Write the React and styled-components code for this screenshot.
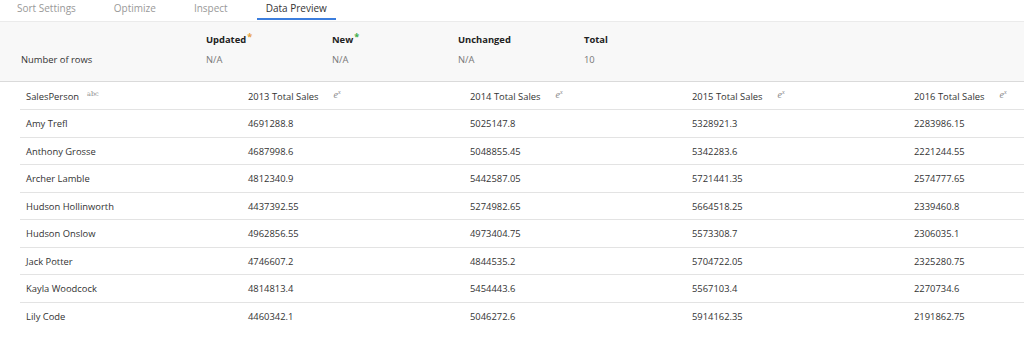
import React from "react";
import styled, { createGlobalStyle } from "styled-components";

const Global = createGlobalStyle`
  html, body { margin: 0; padding: 0; background: #fff; }
  body { font-family: "Open Sans", "Noto Sans", sans-serif; color: #323130; overflow: hidden; }
`;

const Page = styled.div`
  width: 1024px;
  height: 357px;
  overflow: hidden;
  background: #fff;
`;

const TabBar = styled.div`
  display: flex;
  gap: 20px;
  padding-left: 8px;
  height: 21px;
`;

const Tab = styled.div`
  padding: 0 9px;
  font-size: 10px;
  line-height: 17px;
  height: 18px;
  color: ${(p) => (p.$active ? "#333" : "#999")};
  border-bottom: 2px solid ${(p) => (p.$active ? "#3b7ddd" : "transparent")};
  white-space: nowrap;
`;

const Summary = styled.div`
  display: grid;
  grid-template-columns: 185px 126px 126px 126px 126px;
  grid-template-rows: 20px 20px;
  align-content: start;
  padding-left: 21px;
  padding-top: 7px;
  box-sizing: border-box;
  height: 61px;
  background: #f8f8f8;
  border-top: 1px solid #ebebeb;
  border-bottom: 1px solid #dadada;
  font-size: 9.4px;
`;

const RowLabel = styled.div`
  grid-row: 2;
  grid-column: 1;
  display: flex;
  align-items: center;
  color: #333;
`;

const StatHead = styled.div`
  grid-row: 1;
  display: flex;
  align-items: center;
  font-weight: 700;
  color: #222;
`;

const Star = styled.span`
  color: ${(p) => p.$color};
  font-size: 9px;
  font-weight: 700;
  align-self: flex-start;
  margin-top: 1px;
  margin-left: 1px;
`;

const StatValue = styled.div`
  grid-row: 2;
  display: flex;
  align-items: center;
  color: #777;
`;

const Table = styled.div`
  margin-left: 20px;
  width: 1110px;
`;

const Row = styled.div`
  display: grid;
  grid-template-columns: repeat(5, 222px);
  height: ${(p) => (p.$head ? "28px" : "27.5px")};
  border-bottom: ${(p) => (p.$last ? "none" : "1px solid #e3e3e3")};
  box-sizing: border-box;
  font-size: 9.4px;
  color: #333;
`;

const Cell = styled.div`
  display: flex;
  align-items: center;
  padding-left: 6px;
  padding-top: 1px;
  white-space: nowrap;
`;

const TypeTag = styled.span`
  font-family: "DejaVu Serif", serif;
  font-size: 6.5px;
  color: #888;
  margin-left: 8px;
  margin-top: -4px;
`;

const ExpTag = styled.span`
  font-family: "Liberation Serif", serif;
  font-style: italic;
  font-size: 10px;
  color: #888;
  margin-left: 15px;
  margin-top: -3px;
  sup { font-size: 6px; }
`;

const tabs = ["Sort Settings", "Optimize", "Inspect", "Data Preview"];

const stats = [
  { label: "Updated", star: "#e8a13a", value: "N/A" },
  { label: "New", star: "#3fae49", value: "N/A" },
  { label: "Unchanged", value: "N/A" },
  { label: "Total", value: "10" },
];

const data = [
  ["Amy Trefl", "4691288.8", "5025147.8", "5328921.3", "2283986.15"],
  ["Anthony Grosse", "4687998.6", "5048855.45", "5342283.6", "2221244.55"],
  ["Archer Lamble", "4812340.9", "5442587.05", "5721441.35", "2574777.65"],
  ["Hudson Hollinworth", "4437392.55", "5274982.65", "5664518.25", "2339460.8"],
  ["Hudson Onslow", "4962856.55", "4973404.75", "5573308.7", "2306035.1"],
  ["Jack Potter", "4746607.2", "4844535.2", "5704722.05", "2325280.75"],
  ["Kayla Woodcock", "4814813.4", "5454443.6", "5567103.4", "2270734.6"],
  ["Lily Code", "4460342.1", "5046272.6", "5914162.35", "2191862.75"],
];

const years = ["2013", "2014", "2015", "2016"];

export default function App() {
  return (
    <Page>
      <Global />
      <TabBar>
        {tabs.map((t) => (
          <Tab key={t} $active={t === "Data Preview"}>{t}</Tab>
        ))}
      </TabBar>
      <Summary>
        <RowLabel>Number of rows</RowLabel>
        {stats.map((s, i) => (
          <StatHead key={s.label} style={{ gridColumn: i + 2 }}>
            {s.label}
            {s.star && <Star $color={s.star}>*</Star>}
          </StatHead>
        ))}
        {stats.map((s, i) => (
          <StatValue key={s.label + "v"} style={{ gridColumn: i + 2 }}>{s.value}</StatValue>
        ))}
      </Summary>
      <Table>
        <Row $head>
          <Cell>SalesPerson<TypeTag>abc</TypeTag></Cell>
          {years.map((y) => (
            <Cell key={y}>
              {y} Total Sales
              <ExpTag>e<sup>x</sup></ExpTag>
            </Cell>
          ))}
        </Row>
        {data.map((r, i) => (
          <Row key={r[0]} $last={i === data.length - 1}>
            {r.map((c, j) => (
              <Cell key={j}>{c}</Cell>
            ))}
          </Row>
        ))}
      </Table>
    </Page>
  );
}
